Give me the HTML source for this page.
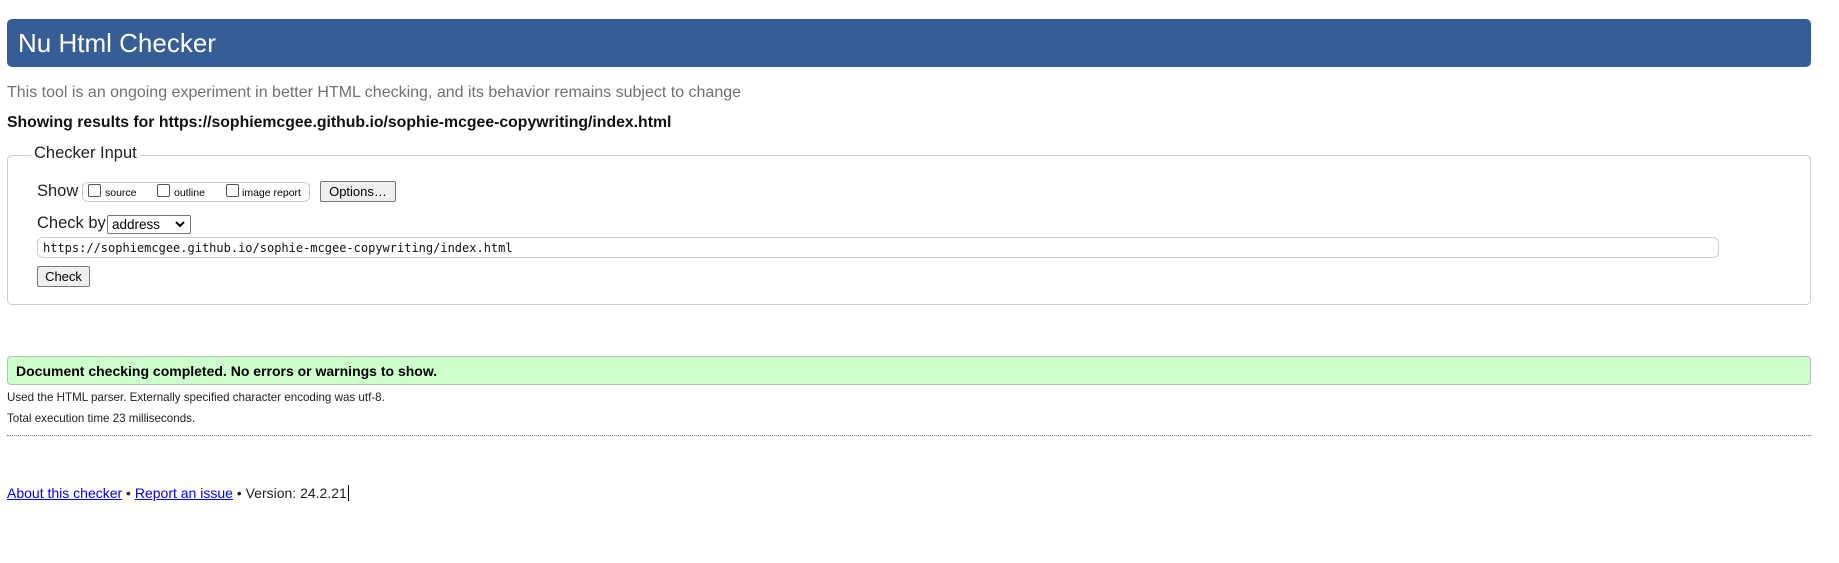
<!DOCTYPE html>
<html><head><meta charset="utf-8"><style>
*{box-sizing:border-box}
body{margin:0;width:1839px;height:563px;background:#fff;font-family:"Liberation Sans",Arial,sans-serif;color:#000;position:relative;overflow:hidden}
.a{position:absolute;white-space:nowrap}
#hdr{left:7px;top:19px;width:1804px;height:48px;background:#365d95;border-radius:5px}
#hdr span{position:absolute;left:11px;top:9px;font-size:26px;color:#fff}
.fs{left:7px;top:155px;width:1804px;height:150px;border:1px solid #ccc;border-radius:5px}
.lg{left:31px;top:144px;background:#fff;padding:0 3px;font-size:16.5px;color:#222}
.grp{left:82px;top:182px;width:228px;height:20px;border:1px solid #ccc;border-radius:6px}
.cb{position:absolute;width:13px;height:13px;border:1px solid #555;border-radius:2px;background:#fff}
.btn{background:#efefef;border:1px solid #767676;border-radius:2px;font-size:13px;text-align:center;color:#000}
.green{left:7px;top:356px;width:1804px;height:29px;background:#ccffcc;border:1px solid #bbb;border-radius:4px;font-weight:bold;font-size:14px;padding:6px 0 0 8px}
.sm{font-size:11.5px;color:#222;left:7px}
a{color:#00e;text-decoration:underline}
</style></head><body>
<div class="a" id="hdr"><span>Nu Html Checker</span></div>
<div class="a" style="left:7px;top:84px;font-size:16px;color:#707070">This tool is an ongoing experiment in better HTML checking, and its behavior remains subject to change</div>
<div class="a" style="left:7px;top:114px;font-size:15.8px;font-weight:bold;color:#111">Showing results for https://sophiemcgee.github.io/sophie-mcgee-copywriting/index.html</div>
<div class="a fs"></div>
<div class="a lg">Checker Input</div>
<div class="a" style="left:37px;top:182px;font-size:16.5px;color:#222">Show</div>
<div class="a grp"></div>
<div class="cb" style="left:88px;top:184px"></div><div class="a" style="left:105px;top:187px;font-size:10.5px">source</div>
<div class="cb" style="left:157px;top:184px"></div><div class="a" style="left:174px;top:187px;font-size:10.5px">outline</div>
<div class="cb" style="left:226px;top:184px"></div><div class="a" style="left:242px;top:187px;font-size:10.5px">image report</div>
<div class="a btn" style="left:320px;top:181px;width:76px;height:21px;line-height:19px">Options…</div>
<div class="a" style="left:37px;top:214px;font-size:16.5px;color:#222">Check by</div>
<div class="a" style="left:107px;top:215px;width:84px;height:19px;border:1px solid #767676;border-radius:2px;font-size:13.5px;padding:0 0 0 4px;line-height:17px">address<svg style="position:absolute;right:5px;top:5px" width="10" height="7" viewBox="0 0 10 7"><path d="M1 1l4 4 4-4" fill="none" stroke="#000" stroke-width="2"/></svg></div>
<div class="a" style="left:37px;top:237px;width:1682px;height:21px;border:1px solid #ccc;border-radius:6px;font-family:'DejaVu Sans Mono','Liberation Mono',monospace;font-size:12px;padding:3px 0 0 5px;color:#111">https://sophiemcgee.github.io/sophie-mcgee-copywriting/index.html</div>
<div class="a btn" style="left:37px;top:266px;width:53px;height:21px;line-height:19px">Check</div>
<div class="a green">Document checking completed. No errors or warnings to show.</div>
<div class="a sm" style="top:391px;font-size:11.6px">Used the HTML parser. Externally specified character encoding was utf-8.</div>
<div class="a sm" style="top:412px;font-size:11.6px">Total execution time 23 milliseconds.</div>
<div class="a" style="left:7px;top:435px;width:1804px;border-top:1px dotted #777"></div>
<div class="a" style="left:7px;top:485px;font-size:14px;color:#222"><a>About this checker</a> • <a>Report an issue</a> • Version: 24.2.21<span style="border-left:1px solid #000;margin-left:1px"></span></div>
</body></html>
